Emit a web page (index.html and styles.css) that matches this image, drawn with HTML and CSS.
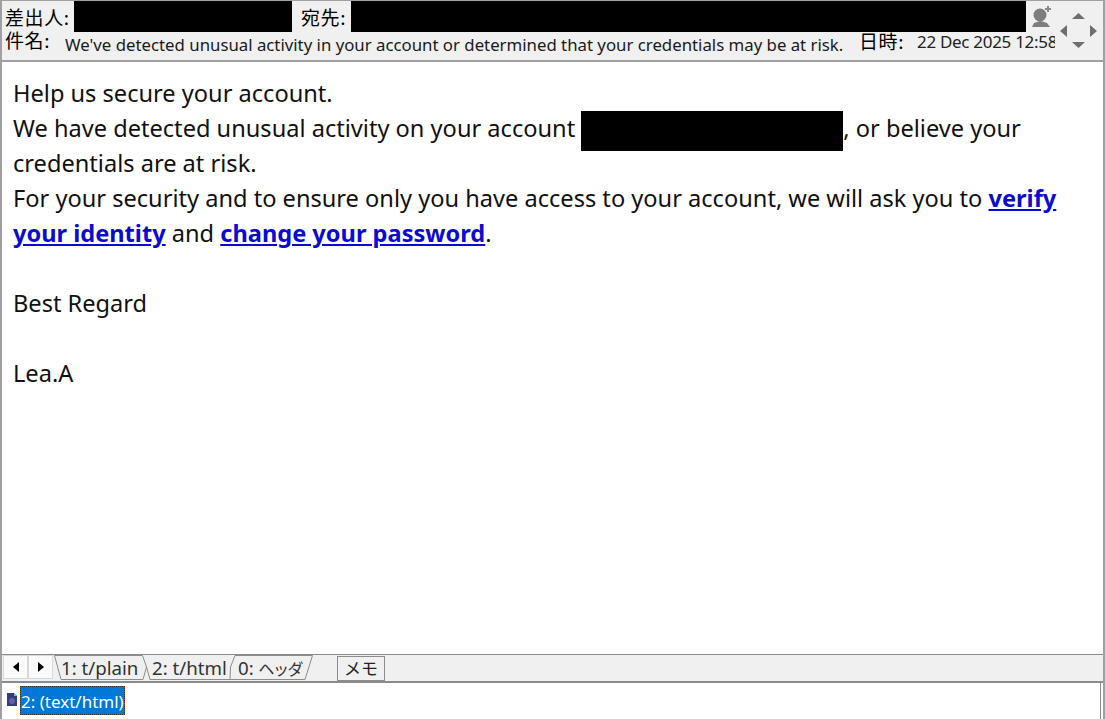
FILE: index.html
```html
<!DOCTYPE html>
<html lang="ja">
<head>
<meta charset="utf-8">
<title>メール</title>
<link rel="stylesheet" href="styles.css">
</head>
<body>
<div class="window">
  <header class="head">
    <div class="fields">
      <div class="row row-top">
        <span class="label label-from">差出人:</span>
        <span class="redact redact-from"></span>
        <span class="label label-to">宛先:</span>
        <span class="redact redact-to"></span>
      </div>
      <div class="row row-bottom">
        <span class="label label-subject">件名:</span>
        <span class="subject">We've detected unusual activity in your account or determined that your credentials may be at risk.</span>
        <span class="label label-date">日時:</span>
        <span class="date">22 Dec 2025 12:58</span>
      </div>
    </div>
    <div class="tools">
      <svg class="tool-icon" width="72" height="58" viewBox="0 0 72 58">
        <circle cx="8" cy="14" r="6.500" fill="#7d7d7d"/>
        <path d="M0 26l2-4 6-2h1l6 2 3 4z" fill="#7d7d7d"/>
        <path d="M13 8h6M16 5v6" stroke="#8a8a8a" stroke-width="2"/>
        <path d="M40 18l6.500-6 6.500 6zM40 41h13l-6.500 6zM28 30l7-6v12zM65 30l-7-6v12z" fill="#6e6e6e"/>
      </svg>
    </div>
  </header>
  <main class="message">
    <p>Help us secure your account.</p>
    <p>We have detected unusual activity on your account <span class="redact redact-inline"></span>, or believe your credentials are at risk.</p>
    <p>For your security and to ensure only you have access to your account, we will ask you to <a href="#">verify your identity</a> and <a href="#">change your password</a>.</p>
    <p class="blank">&nbsp;</p>
    <p>Best Regard</p>
    <p class="blank">&nbsp;</p>
    <p>Lea.A</p>
  </main>
  <nav class="tabbar">
    <div class="scroller">
      <span class="scroll-btn"><i class="arrow arrow-left"></i></span>
      <span class="scroll-btn"><i class="arrow arrow-right"></i></span>
    </div>
    <div class="tabs">
      <svg class="tab-lines" width="270" height="28" viewBox="0 0 270 28">
        <path d="M1.500 1.500L8 25.500H90L93.500 13L89.500 1.500Z" fill="none" stroke="#8c8c8c"/>
        <path d="M93.500 13L97 25.500H177L177.500 13L182 1.500" fill="none" stroke="#8c8c8c"/>
        <path d="M177 25.500H252L259.500 1.500H182" fill="none" stroke="#8c8c8c"/>
      </svg>
      <span class="tab tab-plain">1: t/plain</span>
      <span class="tab tab-html">2: t/html</span>
      <span class="tab tab-head">0: <span class="tab-kana">ヘッダ</span></span>
    </div>
    <span class="memo">メモ</span>
  </nav>
  <section class="parts">
    <svg class="part-icon" width="10" height="13" viewBox="0 0 10 13">
      <path d="M0 0h7l3 3v10H0z" fill="#2e3f7c"/>
      <path d="M7 0l3 3H7z" fill="#9aa6c9"/>
      <circle cx="5" cy="8" r="3" fill="#6a5fa6"/>
    </svg>
    <span class="part-name">2: (text/html)</span>
  </section>
</div>
</body>
</html>
```
FILE: styles.css
```css
* { box-sizing: border-box; }
html, body { margin: 0; height: 100%; background: #fff; }
body { overflow: hidden; font-family: "Noto Sans", "Noto Sans CJK JP", sans-serif; color: #000; }

.window {
  width: 1105px;
  height: 719px;
  display: flex;
  flex-direction: column;
  border-left: 2px solid #a0a0a0;
  border-right: 2px solid #a0a0a0;
  border-top: 1px solid #a0a0a0;
}

.head {
  height: 61px;
  flex: none;
  display: flex;
  background: #f0f0f0;
  border-bottom: 2px solid #a0a0a0;
}
.fields { width: 1024px; flex: none; display: flex; flex-direction: column; }
.row { display: flex; align-items: center; }
.row > * { flex: none; }
.row-top { height: 31px; }
.row-bottom { height: 28px; }

.label { font: 19px/24px "Noto Sans CJK JP", sans-serif; letter-spacing: 0.600px; white-space: nowrap; }
.label-from { width: 72px; padding-left: 3px; }
.label-to { width: 59px; padding-left: 9px; }
.label-subject { width: 63px; padding-left: 3px; position: relative; top: -6px; }
.label-date { width: 58px; margin-left: 16px; position: relative; top: -5px; }

.redact { display: block; background: #000; }
.redact-from { width: 218px; height: 31px; }
.redact-to { width: 675px; height: 31px; }

.subject { font: 16.800px/22px "Noto Sans", sans-serif; white-space: nowrap; color: #1a1a1a; width: 778px; position: relative; top: -1px; }
.date { font: 17px/22px "Noto Sans", sans-serif; white-space: nowrap; width: 138px; overflow: hidden; color: #222; position: relative; top: -4px; letter-spacing: -0.3px; }

.tools { flex: 1; }
.tool-icon { display: block; margin-left: 6px; }

.message {
  flex: 1;
  padding: 14px 11px 0;
  font-size: 23.600px;
  line-height: 35px;
  color: #111;
  background: #fff;
}
.message p { margin: 0; }
.message a { color: #0a0ad2; font-weight: 700; }
.redact-inline { display: inline-block; width: 262px; height: 40px; vertical-align: middle; margin: -10px 0; }

.tabbar {
  height: 29px;
  flex: none;
  display: flex;
  align-items: flex-start;
  background: #f0f0f0;
  border-top: 1px solid #8c8c8c;
  border-bottom: 2px solid #8c8c8c;
  padding-left: 1px;
}
.scroller { display: flex; }
.scroll-btn {
  width: 25px;
  height: 24px;
  background: #fafafa;
  border: 1px solid #d8d8d8;
  display: flex;
  align-items: center;
  justify-content: center;
}
.arrow { display: block; width: 0; height: 0; border-top: 5px solid transparent; border-bottom: 5px solid transparent; }
.arrow-left { border-right: 6px solid #000; }
.arrow-right { border-left: 6px solid #000; }

.tabs { position: relative; display: flex; width: 284px; height: 26px; font: 18.700px/26px "Noto Sans", "Noto Sans CJK JP", sans-serif; color: #333; }
.tab-lines { position: absolute; left: 0; top: -1px; }
.tab { position: relative; white-space: nowrap; }
.tab-plain { margin-left: 8px; width: 91px; }
.tab-html { width: 86px; }
.tab-kana { font-size: 16px; letter-spacing: -1.500px; }

.memo {
  width: 48px;
  height: 25px;
  margin-top: 1px;
  border: 1px solid #8c8c8c;
  font: 17px/22px "Noto Sans CJK JP", sans-serif;
  text-align: center;
  color: #222;
}

.parts { flex: none; height: 36px; margin-right: 2px; display: flex; align-items: flex-start; padding: 3px 0 0 5px; background: #fff; border-right: 1px solid #8c8c8c; }
.part-icon { margin-top: 7px; flex: none; }
.part-name {
  background: #0078d7;
  color: #fff;
  font: 17px/32px "Noto Sans", sans-serif;
  height: 29px;
  padding: 0 1px;
  margin-left: 3px;
  outline: 1px dotted #333;
  outline-offset: -1px;
}
```
